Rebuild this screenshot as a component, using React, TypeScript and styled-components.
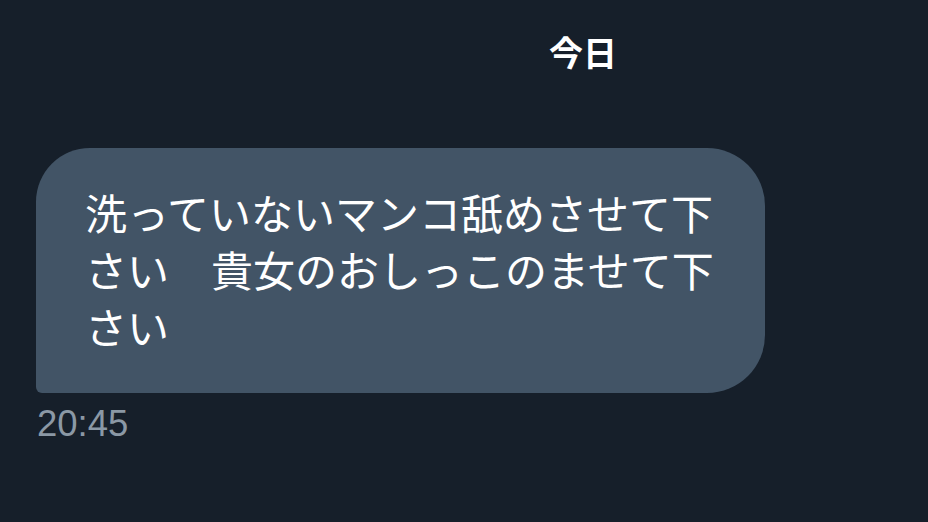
import styled, { createGlobalStyle } from 'styled-components'

const GlobalStyle = createGlobalStyle`
  html, body {
    margin: 0;
    padding: 0;
    background: #161f2a;
  }
  body {
    font-family: "Noto Sans CJK JP", "Noto Sans", sans-serif;
  }
`

const Screen = styled.div`
  width: 928px;
  height: 522px;
  overflow: hidden;
  background: #161f2a;
  display: flex;
  flex-direction: column;
  padding: 0 36px;
  box-sizing: border-box;
`

const DateRow = styled.div`
  display: flex;
  justify-content: center;
  padding: 30px 0 0 238px;
  height: 148px;
  box-sizing: border-box;
`

const DateLabel = styled.span`
  font-family: "Noto Sans CJK JP", sans-serif;
  font-weight: 700;
  font-size: 34px;
  line-height: 44px;
  color: #ffffff;
`

const Message = styled.div`
  display: flex;
  flex-direction: column;
  align-items: flex-start;
  gap: 9px;
`

const Bubble = styled.div`
  width: 729px;
  box-sizing: border-box;
  padding: 35px 40px 39px 49px;
  background: #425466;
  border-radius: 54px 58px 58px 6px;
  color: #ffffff;
  font-family: "Noto Sans CJK JP", sans-serif;
  font-size: 42px;
  line-height: 57px;
`

const Time = styled.span`
  font-family: "Liberation Sans", Arial, sans-serif;
  font-size: 36.5px;
  line-height: 44px;
  color: #8b98a5;
  padding-left: 1px;
`

export default function App() {
  return (
    <>
      <GlobalStyle />
      <Screen>
        <DateRow>
          <DateLabel>今日</DateLabel>
        </DateRow>
        <Message>
          <Bubble>洗っていないマンコ舐めさせて下さい　貴女のおしっこのませて下さい</Bubble>
          <Time>20:45</Time>
        </Message>
      </Screen>
    </>
  )
}
